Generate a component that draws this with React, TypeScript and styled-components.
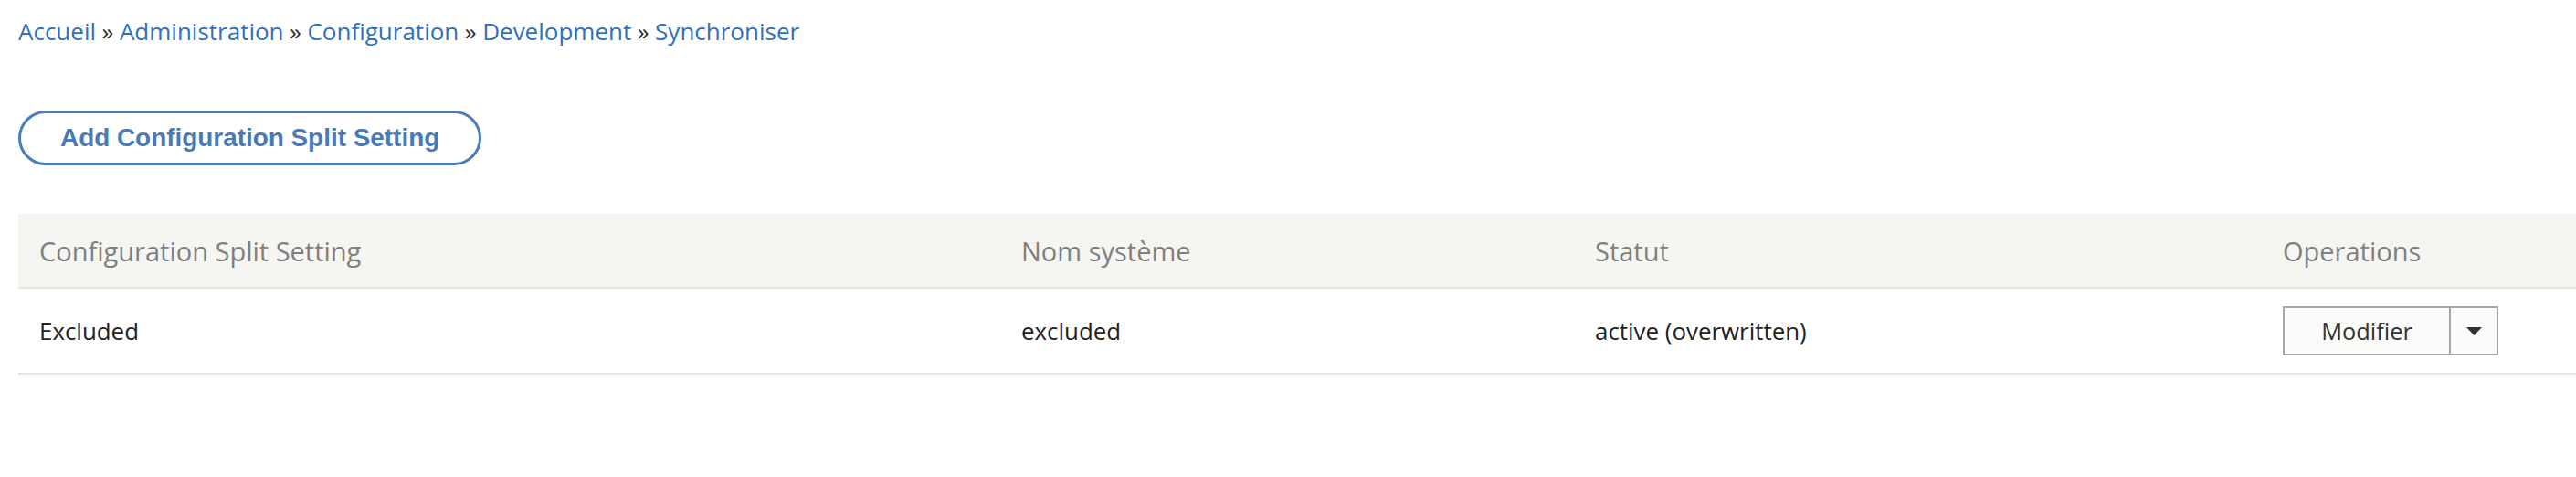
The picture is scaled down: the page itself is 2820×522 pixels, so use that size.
import React from "react"
import styled, { createGlobalStyle } from "styled-components"

const GlobalStyle = createGlobalStyle`
  html, body {
    margin: 0;
    padding: 0;
    background: #fff;
  }
  body {
    font-family: "Open Sans", "Noto Sans", sans-serif;
    color: #222;
    overflow: hidden;
  }
`

const Page = styled.div`
  padding: 16px 0 0 20px;
`

const Breadcrumb = styled.nav`
  font-size: 26px;
  line-height: 36px;
  color: #333;
  white-space: nowrap;

  a {
    color: #2f70bd;
    text-decoration: none;
  }
`

const Separator = styled.span`
  color: #2b2b2b;
  margin: 0 0.25em;
`

const Actions = styled.div`
  margin-top: 69px;
  margin-bottom: 53px;
`

const PillButton = styled.a`
  display: inline-flex;
  align-items: center;
  justify-content: center;
  box-sizing: border-box;
  height: 60px;
  padding: 0 43px;
  border: 3px solid #4a7dba;
  border-radius: 30px;
  font-family: "Liberation Sans", Arial, sans-serif;
  font-weight: bold;
  font-size: 27.9px;
  color: #477ab8;
  text-decoration: none;
  background: #fff;
`

const Table = styled.table`
  width: 100%;
  border-collapse: collapse;
  table-layout: fixed;
`

const HeadCell = styled.th`
  height: 80px;
  padding: 0 23px;
  background: #f5f5f2;
  border-bottom: 2px solid #e6e4df;
  font-weight: normal;
  font-size: 29px;
  color: #7f7f7f;
  text-align: left;
  white-space: nowrap;
`

const Cell = styled.td`
  height: 92px;
  padding: 0 23px;
  border-bottom: 2px solid #e6e4df;
  font-size: 25.9px;
  color: #222;
  white-space: nowrap;
  vertical-align: middle;
`

const SplitButton = styled.div`
  display: inline-flex;
  box-sizing: border-box;
  height: 54px;
  border: 2px solid #a8a8a8;
  background: #fbfbf9;
  vertical-align: middle;
`

const SplitMain = styled.span`
  display: flex;
  align-items: center;
  justify-content: center;
  width: 180px;
  font-size: 25.4px;
  color: #333;
  border-right: 2px solid #a8a8a8;
`

const SplitToggle = styled.span`
  display: flex;
  align-items: center;
  justify-content: center;
  width: 50px;
`

const Caret = () => (
  <svg width="17" height="9" viewBox="0 0 17 9">
    <path d="M0 0 H17 L8.5 9 Z" fill="#333" />
  </svg>
)

const crumbs = ["Accueil", "Administration", "Configuration", "Development", "Synchroniser"]

const columns = [
  { label: "Configuration Split Setting", width: 1075 },
  { label: "Nom système", width: 628 },
  { label: "Statut", width: 753 },
  { label: "Operations", width: undefined },
]

export default function App() {
  return (
    <Page>
      <GlobalStyle />
      <Breadcrumb>
        {crumbs.map((c, i) => (
          <React.Fragment key={c}>
            {i > 0 && <Separator>»</Separator>}
            <a href="#">{c}</a>
          </React.Fragment>
        ))}
      </Breadcrumb>

      <Actions>
        <PillButton href="#">Add Configuration Split Setting</PillButton>
      </Actions>

      <Table>
        <colgroup>
          {columns.map((c) => (
            <col key={c.label} style={c.width ? { width: c.width } : undefined} />
          ))}
        </colgroup>
        <thead>
          <tr>
            {columns.map((c) => (
              <HeadCell key={c.label}>{c.label}</HeadCell>
            ))}
          </tr>
        </thead>
        <tbody>
          <tr>
            <Cell>Excluded</Cell>
            <Cell>excluded</Cell>
            <Cell>active (overwritten)</Cell>
            <Cell>
              <SplitButton>
                <SplitMain>Modifier</SplitMain>
                <SplitToggle>
                  <Caret />
                </SplitToggle>
              </SplitButton>
            </Cell>
          </tr>
        </tbody>
      </Table>
    </Page>
  )
}
